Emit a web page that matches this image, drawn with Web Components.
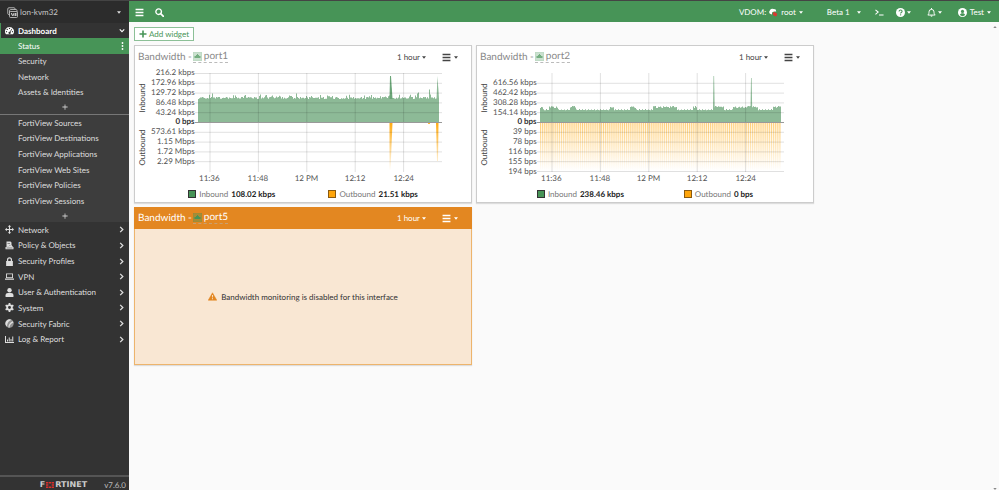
<!DOCTYPE html>
<html lang="en">
<head>
<meta charset="utf-8">
<title>lon-kvm32 - Dashboard</title>
<style>
html, body { margin: 0; height: 100%; }
body { font-family: Lato, "Open Sans", sans-serif; font-size: 8px; line-height: 12px; color: #444; background: #fafafa; overflow: hidden; text-rendering: geometricPrecision; }
</style>
</head>
<body>
<app-shell></app-shell>
<script>
const ICONS = {
  bars: ['0 0 16 16', '<path d="M1 1.500h14v2.400H1zM1 6.800h14v2.400H1zM1 12.100h14v2.400H1z"/>'],
  search: ['0 0 16 16', '<circle cx="6.5" cy="6.5" r="5" fill="none" stroke="currentColor" stroke-width="2.4"/><path d="M10 10l5 5" stroke="currentColor" stroke-width="3" stroke-linecap="round"/>'],
  caret: ['0 0 10 6', '<path d="M0 0h10L5 6z"/>'],
  right: ['0 0 10 16', '<path d="M2 2l6 6-6 6" fill="none" stroke="currentColor" stroke-width="3"/>'],
  down: ['0 0 16 10', '<path d="M2 2l6 6 6-6" fill="none" stroke="currentColor" stroke-width="3"/>'],
  dots: ['0 0 4 16', '<circle cx="2" cy="2" r="1.8"/><circle cx="2" cy="8" r="1.8"/><circle cx="2" cy="14" r="1.8"/>'],
  plus: ['0 0 16 16', '<path d="M6.4 1h3.2v5.4H15v3.2H9.600V15H6.400V9.600H1V6.400h5.400z"/>'],
  thin: ['0 0 16 16', '<path d="M6.900 1h2.200v5.900H15v2.200H9.100V15H6.900V9.100H1V6.900h5.900z"/>'],
  device: ['0 0 22 22', '<g fill="none" stroke="currentColor" stroke-width="1.7"><path d="M5 15H3.500a2 2 0 0 1-2-2V4a2.500 2.500 0 0 1 2.500-2.500h10A2 2 0 0 1 16 3.500V5M5 12V7.500A2.500 2.500 0 0 1 7.500 5H18a2 2 0 0 1 2 2v4"/><rect x="5" y="9" width="16" height="12" rx="2"/></g><path d="M8 12h2l1.500 4 1.500-4h2v6h-2v-3l-1 3h-1.500L8 14zM16 12h3v6h-3z"/>'],
  gauge: ['0 0 18 16', '<path fill-rule="evenodd" d="M9 1a9 9 0 0 0-7.700 13.600l.7.9h14l.7-.9A9 9 0 0 0 9 1zM9 2.600a1.300 1.300 0 1 1 0 2.600 1.300 1.300 0 0 1 0-2.600zM4.500 4.600a1.300 1.300 0 1 1 0 2.600 1.300 1.300 0 0 1 0-2.600zM3 9a1.300 1.300 0 1 1 0 2.600A1.300 1.300 0 0 1 3 9zm12 0a1.300 1.300 0 1 1 0 2.600A1.300 1.300 0 0 1 15 9zm-1.800-4.300l1 .6-3.300 5.800a2.200 2.200 0 1 1-1.200-.7z"/>'],
  move: ['0 0 16 16', '<path d="M8 0l3 3.300H9v3.700h3.700V5L16 8l-3.300 3V9H9v3.700h2L8 16l-3-3.300h2V9H3.300v2L0 8l3.300-3v2H7V3.300H5z"/>'],
  policy: ['0 0 18 16', '<path d="M3 0h8l2 2v6H9l-4 3H3z"/><path d="M7 9l6-2 3 4H5zM1 11h16v4.500H1z"/><path d="M3 12.600h12v1H3zM5 3h5v1H5z" fill="#333"/>'],
  lock: ['0 0 14 16', '<path d="M2.500 7V5a4.500 4.500 0 0 1 9 0v2H13v9H1V7zm2.200 0h4.600V5a2.300 2.300 0 0 0-4.600 0z"/>'],
  laptop: ['0 0 18 16', '<path fill-rule="evenodd" d="M2 2h14v9H2zm1.800 1.700v5.600h10.400V3.700zM0 12h18v2.500H0z"/>'],
  user: ['0 0 14 16', '<circle cx="7" cy="4" r="3.900"/><path d="M0 16v-3c0-2.500 2-4 4-4h6c2 0 4 1.500 4 4v3z"/>'],
  gear: ['0 0 16 16', '<circle cx="8" cy="8" r="4.200" fill="none" stroke="currentColor" stroke-width="3.200"/><path d="M8 0v3.500M8 12.500V16M1.100 4l3 1.800M11.900 10.200l3 1.800M1.100 12l3-1.800M11.900 5.800l3-1.800" stroke="currentColor" stroke-width="3.200"/>'],
  fabric: ['0 0 16 16', '<circle cx="8" cy="8" r="7.500" opacity=".55"/><path d="M1 10A7.500 7.500 0 0 1 12 1.600C7 3 4 6 3.500 13.500A8 8 0 0 1 1 10zM6 15c0-5 3-9 8-11l1 2C10 8 8 11 8 15.500z"/>'],
  chart: ['0 0 18 16', '<path d="M0 1h2v12h16v2H0zM4 8h2v4H4zM7.500 4h2v8h-2zM11 7h2v5h-2zM14.500 2h2v10h-2z"/>'],
  cloud: ['0 0 18 16', '<path fill="#fff" d="M3 11a4 4 0 0 1-1.500-6.500A5 5 0 0 1 9 1a5 5 0 0 1 5.500 5L10 6 6 8v4z"/><path fill="#d63a32" d="M8 8l3-1 5 3v4l-3 2-5-3z"/>'],
  term: ['0 0 20 16', '<path d="M1 2l6 5-6 5M9 13.500h10" fill="none" stroke="currentColor" stroke-width="2.400"/>'],
  help: ['0 0 16 16', '<circle cx="8" cy="8" r="8"/><path d="M5.500 6.200C5.500 2.500 11 3 10.800 6c0 2-2.600 2-2.600 3.600" fill="none" stroke="#479457" stroke-width="1.900"/><circle cx="8.200" cy="12.200" r="1.300" fill="#479457"/>'],
  bell: ['0 0 16 16', '<path d="M8 0v2.500M1.500 12.500c2-2 2-3.500 2-5.500a4.500 4.500 0 0 1 9 0c0 2 0 3.500 2 5.500z" fill="none" stroke="currentColor" stroke-width="1.700" stroke-linejoin="round"/><path d="M6 13.500h4a2 2 0 0 1-4 0z"/>'],
  account: ['0 0 16 16', '<circle cx="8" cy="8" r="8"/><circle cx="8" cy="6" r="2.800" fill="#479457"/><path d="M3.500 12.500c0-4 9-4 9 0a6 6 0 0 1-9 0z" fill="#479457"/>'],
  port: ['0 0 18 18', '<path fill="#479457" fill-opacity=".38" stroke="#479457" stroke-opacity=".6" d="M.5.5h17v17H.5z"/><path fill="#479457" d="M3 12V8h3V6h2V4h2v2h2v2h3v4z"/>'],
  warn: ['0 0 18 16', '<path d="M9 .5L17.500 15.500H.5z" stroke="currentColor" stroke-linejoin="round"/><path d="M8 5h2l-.3 5H8.300zM8 11.500h2v2H8z" fill="#f9e7d3"/>']
};
const define = (tag, cls) => customElements.define(tag, cls);

define('ui-icon', class extends HTMLElement {
  connectedCallback() {
    const [box, art] = ICONS[this.getAttribute('name')];
    this.attachShadow({ mode: 'open' }).innerHTML = `<style>
      :host { display: inline-flex; flex: none; width: 9px; height: 9px; }
      svg { width: 100%; height: 100%; fill: currentColor; display: block; }
    </style><svg viewBox="${box}" aria-hidden="true">${art}</svg>`;
  }
});

define('nav-item', class extends HTMLElement {
  connectedCallback() {
    const icon = this.getAttribute('icon');
    const end = this.getAttribute('end');
    this.attachShadow({ mode: 'open' }).innerHTML = `<style>
      :host { display: flex; min-height: 0; color: #dedede; }
      a { flex: 1; display: flex; align-items: center; padding: 0 5px; color: inherit; text-decoration: none; }
      .lead { width: 13px; display: flex; }
      .text { flex: 1; }
      :host([open]) { color: #fff; font-weight: 700; border-left: 1px solid #479457; }
      :host([open]) a { padding-left: 4px; }
      :host([active]) { background: #479457; color: #fff; }
      .right { width: 5px; height: 7px; }
      .down { width: 6px; height: 5px; margin-right: -1px; }
      .dots { width: 3px; height: 8px; }
    </style><a href="#"><span class="lead">${icon ? `<ui-icon name="${icon}"></ui-icon>` : ''}</span><span class="text"><slot></slot></span>${end ? `<ui-icon class="${end}" name="${end}"></ui-icon>` : ''}</a>`;
  }
});

define('side-bar', class extends HTMLElement {
  connectedCallback() {
    const sub = t => `<nav-item>${t}</nav-item>`;
    this.attachShadow({ mode: 'open' }).innerHTML = `<style>
      :host { display: flex; flex-direction: column; background: #333; color: #ddd; border-top: 1px solid #444; box-sizing: border-box; }
      .host { display: flex; align-items: center; gap: 3px; height: 22px; padding: 0 8px 0 7px; border: 0; background: #2c2c2c; color: #c4c4c4; font: inherit; text-rendering: inherit; }
      .host span { flex: 1; text-align: left; }
      .host .device { width: 11px; height: 11px; margin-right: -1px; }
      .caret { width: 4px; height: 3px; color: #ddd; }
      nav { flex: 1; }
      .head { height: 15px; }
      .group { background: #3d3d3d; }
      .rows { display: grid; grid-auto-rows: 1fr; }
      .four { height: 62px; }
      .six { height: 94px; }
      .eight { height: 125px; }
      .add { display: flex; align-items: center; justify-content: center; width: 100%; height: 14px; padding: 0; border: 0; background: none; color: #ccc; }
      .add ui-icon { width: 6px; height: 6px; }
      hr { margin: 0; border: 0; border-top: 1px solid #777; }
      .last { height: 13px; }
      footer { display: flex; justify-content: flex-end; align-items: flex-start; gap: 17px; height: 13px; padding: 0 3px 0 0; border-top: 2px solid #555; color: #bbb; }
      .brand { display: flex; align-items: center; padding-top: 2px; font: 700 8px/11px "DejaVu Sans", sans-serif; color: #ccc; }
      .brand svg { width: 8px; height: 6px; margin: 0 1px; }
      .ver { padding-top: 4px; line-height: 9px; }
    </style>
    <button class="host"><ui-icon class="device" name="device"></ui-icon><span>lon-kvm32</span><ui-icon class="caret" name="caret"></ui-icon></button>
    <nav>
      <nav-item class="head" icon="gauge" end="down" open>Dashboard</nav-item>
      <div class="group">
        <div class="rows four"><nav-item active end="dots">Status</nav-item>${['Security', 'Network', 'Assets &amp; Identities'].map(sub).join('')}</div>
        <button class="add" aria-label="Add dashboard"><ui-icon name="thin"></ui-icon></button>
        <hr>
        <div class="rows six">${['Sources', 'Destinations', 'Applications', 'Web Sites', 'Policies', 'Sessions'].map(t => sub('FortiView ' + t)).join('')}</div>
        <button class="add last" aria-label="Add monitor"><ui-icon name="thin"></ui-icon></button>
      </div>
      <div class="rows eight">${[['move', 'Network'], ['policy', 'Policy &amp; Objects'], ['lock', 'Security Profiles'], ['laptop', 'VPN'], ['user', 'User &amp; Authentication'], ['gear', 'System'], ['fabric', 'Security Fabric'], ['chart', 'Log &amp; Report']].map(([i, t]) => `<nav-item icon="${i}" end="right">${t}</nav-item>`).join('')}</div>
    </nav>
    <footer><span class="brand">F<svg viewBox="0 0 14 12" preserveAspectRatio="none"><path fill="#d9302c" d="M0 0h4v3H0zM5 0h4v3H5zM10 0h4v3h-4zM0 4.500h4v3H0zM10 4.500h4v3h-4zM0 9h4v3H0zM5 9h4v3H5zM10 9h4v3h-4z"/></svg>RTINET</span><span class="ver">v7.6.0</span></footer>`;
  }
});

define('top-bar', class extends HTMLElement {
  connectedCallback() {
    this.attachShadow({ mode: 'open' }).innerHTML = `<style>
      :host { display: flex; align-items: center; height: 22px; box-sizing: border-box; padding: 1px 8px 0 6px; background: #479457; border-top: 1px solid #444; color: #fff; }
      button { display: flex; align-items: center; gap: 3px; padding: 0; border: 0; background: none; color: inherit; font: inherit; text-rendering: inherit; }
      .menu { margin-right: 11px; }
      .space { flex: 1; }
      .set { display: flex; align-items: center; }
      .caret { width: 4px; height: 3px; }
      .root { gap: 3px; margin: 0 24px 0 3px; }
      .beta { gap: 7px; margin-right: 14px; }
      .term { margin-right: 12px; }
      .help, .bell { gap: 2px; margin-right: 16px; }
    </style>
    <button class="menu" aria-label="Menu"><ui-icon name="bars"></ui-icon></button>
    <button aria-label="Search"><ui-icon name="search"></ui-icon></button>
    <span class="space"></span>
    <span class="set">VDOM:<button class="root"><ui-icon name="cloud"></ui-icon>root<ui-icon class="caret" name="caret"></ui-icon></button></span>
    <button class="beta">Beta 1<ui-icon class="caret" name="caret"></ui-icon></button>
    <button class="term" aria-label="CLI console"><ui-icon name="term"></ui-icon></button>
    <button class="help" aria-label="Help"><ui-icon name="help"></ui-icon><ui-icon class="caret" name="caret"></ui-icon></button>
    <button class="bell" aria-label="Notifications"><ui-icon name="bell"></ui-icon><ui-icon class="caret" name="caret"></ui-icon></button>
    <button class="acct"><ui-icon name="account"></ui-icon>Test<ui-icon class="caret" name="caret"></ui-icon></button>`;
  }
});

define('dash-widget', class extends HTMLElement {
  connectedCallback() {
    this.attachShadow({ mode: 'open' }).innerHTML = `<style>
      :host { display: flex; flex-direction: column; box-sizing: border-box; min-height: 158px; background: #fff; border: 1px solid #ccc; box-shadow: 0 1px 1px #ddd; }
      header { display: flex; align-items: center; height: 22px; padding: 0 13px 0 3px; color: #444; }
      h2 { display: flex; align-items: center; gap: 1px; flex: 1; margin: 0; font-size: 10px; line-height: 13px; font-weight: 400; color: #888; }
      a { display: flex; align-items: center; gap: 2px; color: inherit; text-decoration: none; border-bottom: 1px dashed #bbb; height: 11px; }
      a ui-icon { opacity: .75; }
      button { display: flex; align-items: center; gap: 2px; padding: 0; border: 0; background: none; color: inherit; font: inherit; text-rendering: inherit; }
      .more { gap: 3px; margin-left: 16px; }
      .caret { width: 4px; height: 3px; }
      .body { flex: 1; display: flex; flex-direction: column; }
      :host([warning]) { background: #f9e7d3; border-color: #edb46c; }
      :host([warning]) header { background: #e38721; color: #fff; margin: -1px -1px 0; padding: 0 14px 0 4px; }
      :host([warning]) h2 { color: #fff; }
      :host([warning]) a { border-bottom-color: #c9a070; }
      :host([warning]) a ui-icon { opacity: 1; }
    </style>
    <header><h2>Bandwidth - <a href="#"><ui-icon name="port"></ui-icon>${this.getAttribute('port')}</a></h2>
      <button>1 hour<ui-icon class="caret" name="caret"></ui-icon></button>
      <button class="more" aria-label="Widget menu"><ui-icon name="bars"></ui-icon><ui-icon class="caret" name="caret"></ui-icon></button></header>
    <div class="body"><slot></slot></div>`;
  }
});

/* Plot units: x 0..247, y 0..99 with the zero line at 49.5. */
const ZERO = 49.5;
function noise(seed) {
  let s = seed;
  return () => (s = (s * 16807) % 2147483647) / 2147483647;
}
function area(heights) {
  return `M3 ${ZERO}` + heights.map((h, i) => `H${3 + i}V${(ZERO - h).toFixed(1)}`).join('') + `H244V${ZERO}z`;
}
const TRAFFIC = {
  port1() {
    const r = noise(71);
    const h = Array.from({ length: 241 }, () => { const v = r(); return 23.5 + v * 2.5 + (v > .85 ? 2 * r() : 0); });
    h[14] = 29; h[98] = 29; h[62] = 28; h[219] = 29; h[220] = 30; h[231] = 33; h[232] = 28;
    return `<path fill="#8dba97" d="${area(h)}"/>
      <path fill="#6aa577" d="M194.500 26L195 3h1L197.500 26z"/><path fill="#8dba97" d="M241.500 26L242.500 3L244 26z"/>
      <path fill="url(#fade)" d="M194.500 ${ZERO}h3L195.500 97h-1zM241 ${ZERO}h2.500L243 88h-1z"/><path fill="#ffb733" d="M233 ${ZERO}h2v1.500h-2z"/>`;
  },
  port2() {
    const r = noise(19);
    const bumps = [[0, 2], [9, 17], [30, 35], [70, 73], [90, 95], [113, 136], [153, 156], [173, 183], [193, 217], [233, 241]];
    const h = Array.from({ length: 241 }, (_, i) => (bumps.some(([a, b]) => i >= a && i <= b) ? 14.5 + r() * 2 : 12.3 + (i % 3 ? 0 : .8) + r() * .3));
    let bars = '';
    for (let x = 3; x < 243; x += 2.1) bars += `M${x.toFixed(1)} ${ZERO}h1V98h-1z`;
    return `<path fill="#8dba97" d="${area(h)}"/>
      <path fill="#8dba97" d="M176 36L176.500 3h.6L177.700 36zM213.500 36L214 5h.6L215.200 36z"/>
      <path fill="url(#fade)" opacity=".5" d="${bars}"/>
      <path fill="url(#fade)" opacity=".15" d="M3 ${ZERO}H244V98H3z"/>`;
  }
};

define('bandwidth-chart', class extends HTMLElement {
  connectedCallback() {
    const labels = this.getAttribute('labels').split('|');
    const port = this.getAttribute('port');
    let grid = '';
    labels.forEach((t, i) => { if (t) grid += `M0 ${(.5 + i * 9.8).toFixed(1)}H247`; });
    for (let i = 0; i < 5; i++) grid += `M${15 + i * 48.4} 0V99`;
    this.attachShadow({ mode: 'open' }).innerHTML = `<style>
      :host { display: flex; flex-direction: column; color: #555; }
      .main { display: grid; grid-template-columns: 12px 41px 1fr; column-gap: 3px; height: 108px; padding: 0 29px 0 1px; }
      .side { display: grid; grid-template-rows: 1fr 1fr; height: 99px; padding-top: 5px; }
      .side span { writing-mode: vertical-rl; rotate: 180deg; text-align: center; font-size: 8px; line-height: 12px; color: #444; }
      .y { display: grid; grid-template-rows: repeat(11, 1fr); margin: 0; padding: 0; list-style: none; text-align: right; align-items: center; line-height: 9px; white-space: nowrap; }
      .zero { font-weight: 700; color: #333; }
      svg { display: block; width: 100%; height: 99px; margin-top: 5px; }
      .x { display: grid; grid-template-columns: repeat(5, 1fr); padding: 0 43px 0 50px; margin-top: -4px; text-align: center; line-height: 12px; }
      .legend { display: flex; justify-content: space-evenly; margin-top: 4px; line-height: 12px; }
      .legend div { display: flex; align-items: center; gap: 3px; color: #777; }
      i { width: 6px; height: 6px; border: 1px solid #333; background: #479457; }
      .out i { background: #ffa50a; border-color: #8a5a10; }
      b { color: #222; }
    </style>
    <div class="main">
      <div class="side"><span>Inbound</span><span>Outbound</span></div>
      <ul class="y">${labels.map(t => `<li class="${t === '0 bps' ? 'zero' : ''}">${t}</li>`).join('')}</ul>
      <svg viewBox="0 0 247 99" preserveAspectRatio="none" role="img" aria-label="Bandwidth over the last hour">
        <defs><linearGradient id="fade" gradientUnits="userSpaceOnUse" x1="0" y1="49" x2="0" y2="98"><stop offset="0" stop-color="#ffa500" stop-opacity=".95"/><stop offset="1" stop-color="#ffa500" stop-opacity="0"/></linearGradient></defs>
        ${TRAFFIC[port]()}
        <path d="${grid}" fill="none" stroke="#000" stroke-opacity=".12"/>
        <path d="M0 ${ZERO}H247" stroke="#999"/>
      </svg>
    </div>
    <div class="x">${['11:36', '11:48', '12 PM', '12:12', '12:24'].map(t => `<span>${t}</span>`).join('')}</div>
    <div class="legend"><div><i></i>Inbound <b>${this.getAttribute('inbound')}</b></div><div class="out"><i></i>Outbound <b>${this.getAttribute('outbound')}</b></div></div>`;
  }
});

define('notice-text', class extends HTMLElement {
  connectedCallback() {
    this.attachShadow({ mode: 'open' }).innerHTML = `<style>
      :host { flex: 1; display: flex; align-items: center; justify-content: center; gap: 4px; color: #333; }
      ui-icon { color: #e38721; }
    </style><ui-icon name="warn"></ui-icon><slot></slot>`;
  }
});

define('app-shell', class extends HTMLElement {
  connectedCallback() {
    this.attachShadow({ mode: 'open' }).innerHTML = `<style>
      :host { display: grid; grid-template-columns: 129px 1fr; height: 100vh; }
      .page { display: flex; flex-direction: column; min-width: 0; }
      main { position: relative; flex: 1; padding: 5px; }
      .add { display: flex; align-items: center; gap: 2px; height: 14px; margin: 0 0 4px; padding: 0 4px; border: 1px solid #8cc097; background: #fff; color: #479457; font: inherit; text-rendering: inherit; }
      .add ui-icon { width: 8px; height: 8px; }
      .grid { display: grid; grid-template-columns: repeat(auto-fill, 338px); gap: 4px; }
      .up, .dn { position: absolute; right: 2px; width: 4px; height: 2px; color: #888; }
      .up { top: 4px; rotate: 180deg; }
      .dn { bottom: 0; }
    </style>
    <side-bar></side-bar>
    <div class="page"><top-bar></top-bar>
      <main>
        <button class="add"><ui-icon name="plus"></ui-icon>Add widget</button>
        <div class="grid">
          <dash-widget port="port1"><bandwidth-chart port="port1" inbound="108.02 kbps" outbound="21.51 kbps" labels="216.2 kbps|172.96 kbps|129.72 kbps|86.48 kbps|43.24 kbps|0 bps|573.61 kbps|1.15 Mbps|1.72 Mbps|2.29 Mbps|"></bandwidth-chart></dash-widget>
          <dash-widget port="port2"><bandwidth-chart port="port2" inbound="238.46 kbps" outbound="0 bps" labels="|616.56 kbps|462.42 kbps|308.28 kbps|154.14 kbps|0 bps|39 bps|78 bps|116 bps|155 bps|194 bps"></bandwidth-chart></dash-widget>
          <dash-widget port="port5" warning><notice-text>Bandwidth monitoring is disabled for this interface</notice-text></dash-widget>
        </div>
        <ui-icon class="up" name="caret"></ui-icon><ui-icon class="dn" name="caret"></ui-icon>
      </main>
    </div>`;
  }
});
</script>
</body>
</html>
